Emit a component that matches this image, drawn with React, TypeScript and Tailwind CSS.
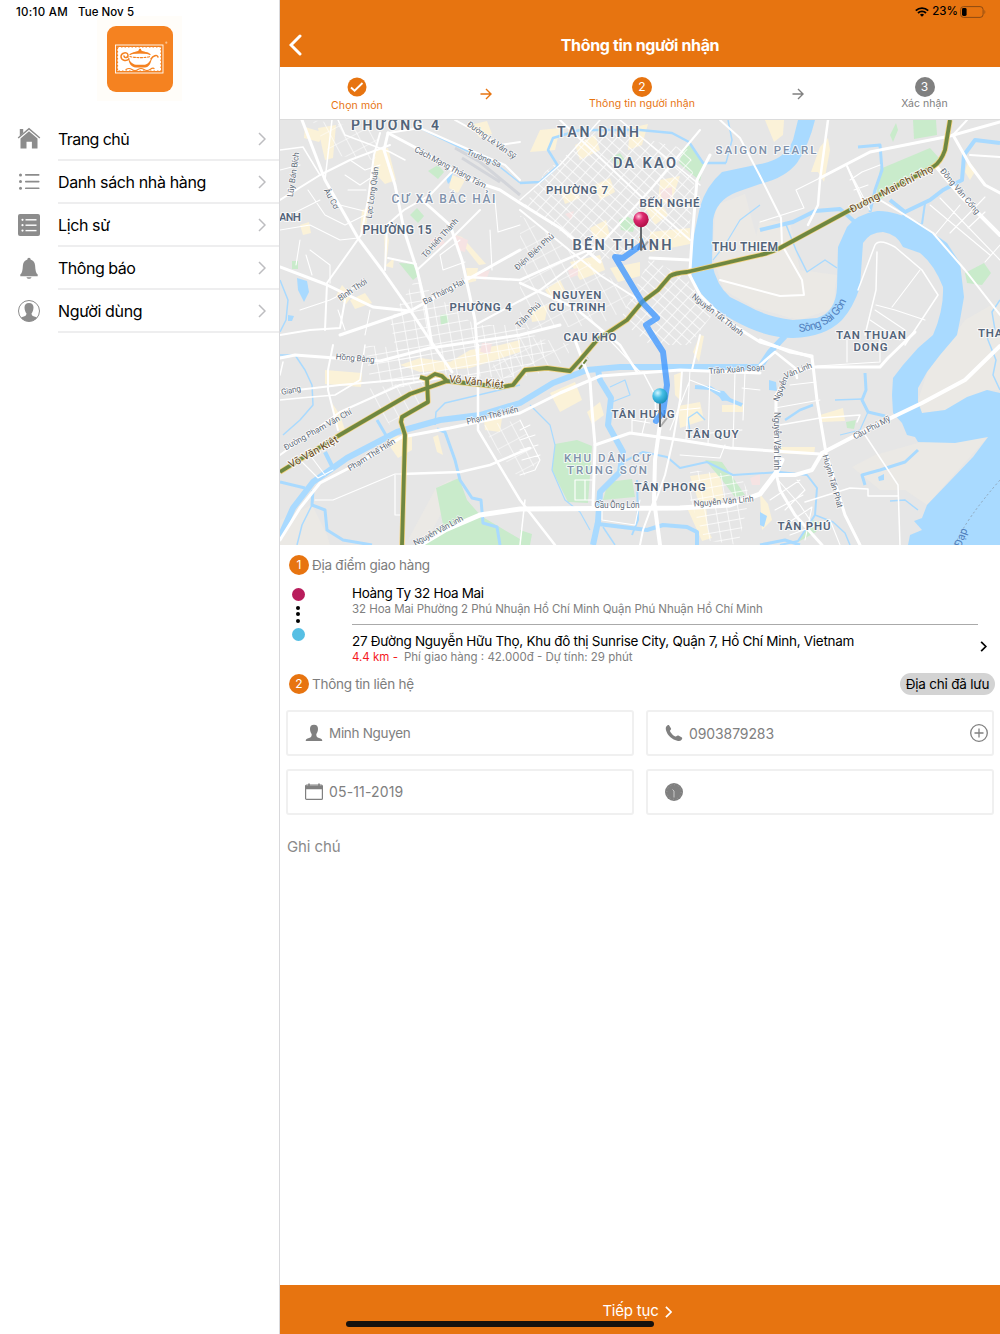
import type { ReactNode } from "react"

type Label = { t: string; x: number; y: number; w: number; s?: number; r?: number }

const MENU: { label: string; icon: ReactNode; tracking: string }[] = [
  { label: "Trang chủ", icon: <HomeIcon />, tracking: "tracking-[-0.58px]" },
  { label: "Danh sách nhà hàng", icon: <ListIcon />, tracking: "tracking-[-0.37px]" },
  { label: "Lịch sử", icon: <HistoryIcon />, tracking: "tracking-[-0.38px]" },
  { label: "Thông báo", icon: <BellIcon />, tracking: "tracking-[-0.48px]" },
  { label: "Người dùng", icon: <UserCircleIcon />, tracking: "tracking-[-0.34px]" },
]

function HomeIcon() {
  return (
    <svg width="24" height="24" viewBox="0 0 24 24" fill="#8c8c8c">
      <path d="M2.8 2h3.4v4L2.8 9z" />
      <path d="M12 .7 23.3 10.6l-.9 1L12 2.7 1.6 11.6l-.9-1z" />
      <path d="M12 4.2 20.5 11.5V21.500h-5.600V14.800H9.500V21.500H3.500V11.500z" />
    </svg>
  )
}

function ListIcon() {
  return (
    <svg width="24" height="24" viewBox="0 0 24 24" fill="#8c8c8c">
      {[4.900, 11.600, 18.300].map((y) => (
        <g key={y}>
          <circle cx="3.500" cy={y} r="1.500" />
          <rect x="8" y={y - 0.8} width="14.500" height="1.600" rx=".7" />
        </g>
      ))}
    </svg>
  )
}

function HistoryIcon() {
  return (
    <svg width="24" height="24" viewBox="0 0 24 24">
      <rect x="1" y="1" width="22" height="22" rx="2" fill="#8c8c8c" />
      {[6.800, 12.200, 17.600].map((y) => (
        <g key={y} fill="white">
          <circle cx="5.500" cy={y} r="1.100" />
          <rect x="8.500" y={y - 0.7} width="11" height="1.400" />
        </g>
      ))}
    </svg>
  )
}

function BellIcon() {
  return (
    <svg width="24" height="24" viewBox="0 0 24 24" fill="#8c8c8c">
      <path d="M12 1.800c1 0 1.600.7 1.600 1.700 2.900.8 4.300 3.200 4.500 6 .3 4.700.7 7.600 2.600 9.100v1.600H3.300v-1.600c1.900-1.500 2.300-4.400 2.600-9.100.2-2.800 1.600-5.200 4.500-6 0-1 .6-1.700 1.600-1.700z" />
      <path d="M9.500 21.200h5c-.4 1.100-1.300 1.600-2.500 1.600s-2.100-.5-2.500-1.600z" />
    </svg>
  )
}

function UserCircleIcon() {
  return (
    <svg width="24" height="24" viewBox="0 0 24 24">
      <circle cx="12" cy="12" r="10.500" fill="white" stroke="#8c8c8c" strokeWidth="1" />
      <path
        d="M12 4c3 0 4.600 1.800 4.500 4.600-.1 2.800-1 4.800-2 6 .2 2 1.200 2.600 3.500 3.200 1.200.3 1.600.6 1.900 1.100C17.900 21 15.200 22.300 12 22.300S6.100 21 4.100 18.900c.3-.5.7-.8 1.900-1.100 2.300-.6 3.300-1.200 3.500-3.200-1-1.200-1.900-3.200-2-6C7.400 5.800 9 4 12 4z"
        fill="#8c8c8c"
      />
    </svg>
  )
}

function Chevron({ className, width = 2 }: { className: string; width?: number }) {
  return (
    <svg className={className} viewBox="0 0 8 14" fill="none" stroke="currentColor" strokeWidth={width}>
      <path d="M1 1l6 6-6 6" />
    </svg>
  )
}

function Logo() {
  return (
    <svg width="85" height="85" viewBox="0 0 85 85" className="block">
      <rect width="85" height="85" fill="#fffdf9" />
      <rect x="10" y="10" width="66" height="66" rx="9" fill="#f58220" />
      <rect x="18.500" y="29" width="47.500" height="28" fill="none" stroke="#fff" strokeWidth=".9" />
      <rect x="20.500" y="31" width="43.500" height="24" fill="white" stroke="#f58220" strokeWidth="1.200" strokeDasharray="1.500 2" />
      <circle cx="69.300" cy="26.700" r="1.100" fill="#fbc08a" />
      <g fill="none" stroke="#f58220" strokeLinecap="round">
        <path d="M33 38.500c4-2.500 16-2.500 20 0" strokeWidth="1.300" />
        <path d="M33 40.500c5 1.500 16 1.500 20 0" strokeWidth="1.100" strokeDasharray="2 1.500" />
        <path d="M54 43c2-3 6-5 7-2" strokeWidth="1.500" />
        <path d="M32 43c-3 2.500-8 1.500-8-2.500 0-4 6.500-5 7-1.500.3 2.800-3.500 3.500-4 1" strokeWidth="1.500" />
        <path d="M29 53.500q3-2 6 0t6 0 6 0 6 0 4-1" strokeWidth="1.200" />
      </g>
      <path d="M31 39.500c1 5.500 4 8.800 8 9.200h9c3.500-.7 5-4.200 7-6.700-1 5-3 9.500-7 9.500H39c-5 0-8-5-8-12z" fill="#f58220" />
      <path d="M34 37.500c4-2 7-2 8-3.500-1-1.700 3-1.700 2 0 1 1.500 5 1.500 9 3.500z" fill="#f58220" />
    </svg>
  )
}

function Sidebar() {
  return (
    <aside className="flex w-[280px] shrink-0 flex-col border-r border-[#d9d9dc]">
      <div className="flex h-6 items-center gap-[10px] pt-[1px] pl-4 text-[11.5px] font-medium text-black">
        <span className="tracking-[0.3px]">10:10 AM</span>
        <span className="tracking-[0.05px]">Tue Nov 5</span>
      </div>
      <div className="-mt-2 ml-[97px]">
        <Logo />
      </div>
      <nav className="mt-[17px]">
        {MENU.map((item) => (
          <div key={item.label} className="flex h-[43px] items-center pl-[17px]">
            <span className="-mt-[1px]">{item.icon}</span>
            <div className="ml-[17px] flex h-full flex-1 items-center justify-between border-b-2 border-[#eeeeef] pr-[13px]">
              <span className={`text-[16px] text-black ${item.tracking}`}>{item.label}</span>
              <Chevron className="h-[14px] w-2 text-[#bdbdc0]" width={1.5} />
            </div>
          </div>
        ))}
      </nav>
    </aside>
  )
}

function Header() {
  return (
    <header className="h-[67px] bg-[#e77410]">
      <div className="flex h-[22px] items-center justify-end pt-[2px] pr-[14px] text-[11.5px] font-medium text-black">
        <svg width="14" height="10" viewBox="0 0 14 10" className="mr-[3px]" fill="none" stroke="black" strokeWidth="1.800">
          <path d="M.8 3.600a9 9 0 0 1 12.400 0M3 6a5.800 5.800 0 0 1 8 0" />
          <path d="M7 9.800 4.900 7.700a3 3 0 0 1 4.200 0z" fill="black" stroke="none" />
        </svg>
        <span>23%</span>
        <svg width="26" height="12" viewBox="0 0 26 12" className="ml-[2px]">
          <rect x=".6" y=".6" width="22.500" height="10.800" rx="3" fill="none" stroke="#8d4a12" />
          <rect x="2" y="2.100" width="4.600" height="7.800" rx="1.400" fill="black" />
          <path d="M24.500 4v4c1-.5 1-3.500 0-4z" fill="#8d4a12" />
        </svg>
      </div>
      <div className="grid h-[45px] grid-cols-[40px_1fr_40px] items-center">
        <svg width="14" height="22" viewBox="0 0 14 22" className="ml-[9px]" fill="none" stroke="white" strokeWidth="3" strokeLinecap="round">
          <path d="M11 2 2 11l9 9" />
        </svg>
        <h1 className="text-center text-[16px] font-bold tracking-[-0.33px] text-white">Thông tin người nhận</h1>
      </div>
    </header>
  )
}

function StepArrow({ className }: { className: string }) {
  return (
    <svg width="12" height="12" viewBox="0 0 12 12" className={`mt-[21px] justify-self-center ${className}`} fill="none" stroke="currentColor" strokeWidth="1.400">
      <path d="M.5 6h10M6 1l5 5-5 5" />
    </svg>
  )
}

function Steps() {
  return (
    <div className="grid h-[53px] grid-cols-[154px_104px_208px_104px_149px] border-b border-[#dcdcdc] text-[10.5px]">
      <div className="flex flex-col items-center pt-[10px] text-[#e77410]">
        <svg width="20" height="20" viewBox="0 0 20 20">
          <circle cx="10" cy="10" r="9.500" fill="#e77410" />
          <path d="m4 10.500 3.600 3.300L15.500 6" fill="none" stroke="white" strokeWidth="1.900" />
        </svg>
        <span className="mt-[2px] leading-[14px] tracking-[0.1px]">Chọn món</span>
      </div>
      <StepArrow className="text-[#e77410]" />
      <div className="flex flex-col items-center pt-[10px] text-[#e77410]">
        <span className="flex size-[20px] items-center justify-center rounded-full bg-[#e77410] text-[12px] text-white">2</span>
        <span className="leading-[14px] tracking-[0.05px]">Thông tin người nhận</span>
      </div>
      <StepArrow className="text-[#808080]" />
      <div className="flex flex-col items-center pt-[10px] text-[#808080]">
        <span className="flex size-[20px] items-center justify-center rounded-full bg-[#808080] text-[12px] text-white">3</span>
        <span className="leading-[14px] tracking-[0.05px]">Xác nhận</span>
      </div>
    </div>
  )
}

/* Map geometry, in the map's own 280..1000 x 120..545 coordinate space */

const RIVER =
  "M798 120 L793 140 Q785 160 760 164 L722 172 Q706 186 700 207 L695 230 Q688 265 693 280 Q705 305 733 320 Q765 338 793 338 Q825 337 842 320 Q853 308 860 287 L863 243 Q870 232 883 232 Q897 234 903 247 L920 253 Q934 264 943 287 Q944 310 933 335 L918 348 L903 365 L893 378 L892 395 L893 413 L902 423 L907 435 L915 437 L918 442 L955 443 L988 437 L973 457 L927 505 L922 518 L914 521 L922 530 L910 535 L908 545 L1000 545 L1000 393 L987 390 L967 397 L945 410 L922 413 L918 402 L918 388 L927 372 L940 355 L957 335 L960 320 L964 297 L960 263 L947 243 L933 233 L920 223 Q893 210 877 211 Q857 214 847 227 L838 247 L837 287 Q836 312 817 318 L793 320 Q765 316 750 307 L730 297 Q716 285 712 263 L713 220 Q716 200 737 192 L760 184 Q785 178 797 163 Q809 145 815 120Z"

const SAND = [
  "M712 255 L716 205 L745 194 L760 250 L800 290 L835 290 L834 308 L800 320 L755 308 L724 290Z",
  "M760 220 L790 222 L800 270 L837 275 L832 305 L790 318 L740 300Z",
  "M918 400 L928 370 L965 320 L1000 300 L1000 390 L987 390 L945 410 L922 413Z",
  "M918 443 L988 437 L927 505 L905 490 L880 490 L852 467 L875 455Z",
  "M280 520 L312 505 L327 535 L330 545 L280 545Z",
  "M436 488 L452 479 L448 500 L430 535 L408 540Z",
]

const PARKS = [
  "M684 147 L691 145 L704 163 L700 181 L679 163Z",
  "M875 203 L880 169 L930 148 L939 158 L930 168Z",
  "M913 120 L936 120 L937 135 L914 139Z",
  "M965 273 L984 263 L991 273 L982 285 L967 283Z",
  "M436 488 L459 478 L467 500 L481 516 L530 545 L415 545 L443 525Z",
  "M555 444 L577 440 L592 446 L588 503 L568 502 L552 470Z",
  "M608 482 L632 479 L635 497 L603 500Z",
  "M705 460 L722 462 L745 495 L735 497 L722 480Z",
  "M428 171 L438 165 L444 172 L438 179Z",
  "M410 215 L417 208 L424 216 L418 223Z",
  "M399 263 L415 264 L418 276 L413 280Z",
  "M440 315 L447 314 L449 322 L441 325Z",
  "M619 220 L627 216 L636 222 L633 232 L621 230Z",
  "M798 542 L812 520 L820 522 L816 532Z",
  "M846 422 L856 420 L854 429 L847 428Z",
  "M610 158 L620 153 L625 160 L617 166Z",
  "M292 261 L298 261 L298 269 L292 269Z",
  "M890 135 L896 123 L898 130 L893 142Z",
  "M520 530 L532 534 L530 545 L520 545Z",
]

const CREAM = [
  "M305 127 L325 133 L319 142 L304 138Z",
  "M318 128 L336 125 L333 158 L325 160 L322 147Z",
  "M374 150 L388 148 L396 180 L385 184 L374 172Z",
  "M452 175 L465 180 L458 193 L449 188Z",
  "M470 125 L487 121 L492 134 L480 138Z",
  "M362 210 L368 208 L366 232 L360 230Z",
  "M384 225 L389 240 L386 265 L394 258 L393 268 L385 266Z",
  "M300 225 L309 222 L311 233 L303 235Z",
  "M342 285 L352 296 L346 304 L336 296Z",
  "M350 300 L365 293 L372 303 L355 309Z",
  "M325 370 L362 373 L361 387 L325 384Z",
  "M330 400 L340 415 L345 430 L339 430Z",
  "M400 365 L420 358 L450 362 L470 350 L500 345 L520 340 L520 352 L470 368 L420 372Z",
  "M455 235 L462 237 L486 264 L479 265Z",
  "M466 268 L478 268 L476 281 L468 283Z",
  "M384 438 L412 434 L412 450 L398 458Z",
  "M433 437 L438 435 L443 455 L437 452Z",
  "M484 420 L502 418 L500 432 L485 430Z",
  "M540 130 L560 128 L555 150 L530 152Z",
  "M575 145 L595 135 L600 150 L580 160Z",
  "M630 128 L648 124 L642 145 L628 150Z",
  "M560 190 L575 185 L580 198 L565 204Z",
  "M595 185 L610 178 L615 192 L600 200Z",
  "M660 180 L680 176 L672 200 L658 205Z",
  "M645 208 L660 200 L668 215 L655 225Z",
  "M590 228 L606 220 L610 236 L595 240Z",
  "M570 262 L600 255 L605 270 L580 280Z",
  "M545 290 L560 280 L566 292 L552 300Z",
  "M650 232 L690 228 L690 244 L650 252Z",
  "M610 268 L640 262 L640 276 L618 282Z",
  "M530 310 L548 305 L545 320 L532 322Z",
  "M550 393 L575 382 L582 400 L560 412Z",
  "M587 412 L600 402 L604 415 L592 424Z",
  "M678 406 L700 402 L704 420 L680 428Z",
  "M674 375 L682 372 L680 400 L675 395Z",
  "M693 352 L700 335 L704 336 L699 362Z",
  "M690 476 L720 472 L724 500 L700 506Z",
  "M688 510 L706 505 L708 530 L712 538 L702 541Z",
  "M722 405 L743 405 L743 412 L722 412Z",
  "M820 415 L843 408 L845 421 L822 422Z",
  "M776 447 L815 447 L814 455 L776 453Z",
  "M820 147 L828 138 L830 150 L824 182 L818 172 L811 172Z",
  "M765 120 L784 120 L783 135 L774 142Z",
  "M968 160 L976 170 L970 180 L965 172Z",
  "M760 494 L768 504 L772 520 L762 530Z",
]

const PINK = [
  "M430 240 L440 236 L445 243 L436 249Z",
  "M455 235 L468 240 L465 252 L457 250Z",
  "M478 273 L490 270 L486 280 L476 278Z",
  "M565 214 L574 211 L571 220Z",
  "M660 190 L672 187 L672 198 L662 200Z",
  "M750 478 L760 474 L760 485 L752 485Z",
  "M482 343 L492 343 L490 354 L480 352Z",
  "M568 270 L578 268 L578 275 L570 278Z",
]

const CANALS: [string, number][] = [
  ["M280 537 L293 508 L313 482 L347 458 L397 432 L440 420 L480 415 L520 403 L553 383 L587 370 L620 367 L760 367 L770 352 L785 336", 6],
  ["M598 370 L600 380 L611 398 L608 425 L623 452 L620 472 L600 492 L598 522 L593 545", 6],
  ["M598 524 L647 530 L663 525 L687 527 L697 532 L697 545", 4],
  ["M623 462 L643 452 L667 457 L680 468 L707 462 L733 475 L780 472 L807 475 L817 488 L815 515 L798 541 L780 545", 2],
  ["M815 515 L833 522 L845 533 L850 545", 1.500],
  ["M520 183 L540 182 L558 166 L548 150 L553 138 L580 130 L640 130 L672 133 L689 142 L703 163 L726 163", 2.500],
  ["M520 183 L495 163 L465 150 L440 138 L420 128", 1.500],
  ["M726 163 L732 140 L728 120", 1.500],
  ["M760 230 L793 222 L815 211 L840 209 L855 222", 4],
  ["M785 222 L796 250 L807 272 L825 260 L837 268", 1.500],
  ["M870 212 L875 190 L882 170 L880 145 L858 147", 3],
  ["M890 200 L905 212 L930 200 L943 190 L962 180 L964 155 L975 140 L1000 143", 4],
  ["M905 212 L903 218", 3],
  ["M925 203 L922 224", 2],
  ["M280 355 L295 355 L305 370 L312 385 L313 405 L300 420 L283 435", 1.500],
  ["M280 280 L288 300 L286 320 L280 332", 1.500],
  ["M325 452 L333 468", 4],
  ["M377 420 L387 437", 3],
  ["M280 482 L305 488", 3],
  ["M313 490 L312 505 L325 510 L327 530 L343 540 L372 545", 3],
  ["M312 505 L302 525 L297 545", 1.500],
  ["M435 425 L436 412 L445 403 L520 385", 1.500],
  ["M437 429 L445 432 L455 460 L460 480 L472 498 L481 500 L483 523 L497 527 L500 545", 3],
  ["M530 405 L550 425 L555 445 L552 470 L565 500 L580 512 L590 530", 1.200],
  ["M865 373 L866 390 L862 400 L868 412 L885 416", 3],
  ["M835 400 L862 399", 1.500],
  ["M868 412 L860 430 L840 435", 1.200],
  ["M918 450 L905 462 L880 470 L862 475 L865 485", 3],
  ["M890 501 L905 500 L918 510", 1.500],
  ["M1000 390 L993 375 L996 360 L988 340 L986 330", 1.500],
  ["M1000 300 L992 312 L995 330", 1.500],
  ["M695 387 L710 388 L725 398 L742 405", 4],
  ["M690 432 L688 418 L697 412 L705 420", 1.500],
  ["M785 420 L800 410 L813 405", 2.500],
  ["M760 545 L785 540 L800 545", 3],
  ["M603 527 L615 545", 1.500],
  ["M637 480 L638 520 L632 535", 2],
  ["M713 260 L725 245 L740 220 L760 205", 1.200],
  ["M610 387 L625 380 L630 395 L612 402", 1.200],
]

const PONDS = [
  "M297 278 L307 281 L309 292 L304 302 L298 290Z",
  "M288 315 L294 316 L292 321 L288 321Z",
  "M446 178 L453 173 L450 182 L448 184Z",
  "M769 380 L776 382 L777 391 L769 390Z",
  "M878 477 L884 474 L884 480 L879 481Z",
  "M715 390 L724 391 L732 400 L722 401Z",
  "M760 512 L767 516 L764 527 L760 525Z",
]

const ROADS: [string, number][] = [
  ["M302 120 L325 180 L358 238 L382 270 L410 310 L430 340 L452 372", 3],
  ["M388 133 L384 150 L395 185 L404 230 L417 270 L425 303 L432 345", 3],
  ["M388 133 L420 150 L465 178 L500 190 L520 203 L560 228 L600 262", 3],
  ["M388 133 L420 128 L447 140 L470 150 L505 165 L520 180", 2],
  ["M380 133 L374 155 L368 200 L361 235 L327 283 L325 330", 2],
  ["M280 200 L320 175 L350 160 L390 145", 2],
  ["M280 267 L325 284 L373 307 L410 311 L470 278 L520 250", 3],
  ["M340 335 L410 311", 3],
  ["M280 335 L310 330 L340 328 L345 300", 2],
  ["M332 120 L325 180", 1.500],
  ["M455 120 L500 145 L520 142", 2],
  ["M422 200 L450 225 L462 260 L475 320 L478 360", 3],
  ["M468 277 L520 280 L560 262 L600 245", 2.500],
  ["M385 270 L387 225 L404 210 L430 195 L452 172", 2],
  ["M388 258 L416 264", 2],
  ["M338 120 L345 135 L390 152 L405 160", 1.500],
  ["M280 150 L303 147 L320 175", 1.500],
  ["M417 270 L455 235 L480 210", 2],
  ["M520 283 L575 308 L620 345 L637 372", 2.500],
  ["M475 325 L540 290 L600 245 L650 190 L700 130", 2],
  ["M520 200 L560 165 L600 120", 1.500],
  ["M520 210 L600 275 L642 302", 2],
  ["M560 120 L650 205 L690 240", 2],
  ["M620 120 L700 185", 1.500],
  ["M710 155 L697 180 L692 240 L690 270", 3],
  ["M650 258 L690 260", 3],
  ["M688 272 L700 295 L725 320 L760 342 L812 357 L817 400 L826 453 L845 515 L860 545", 3],
  ["M280 358 L295 355 L335 358 L380 361 L430 348 L520 335 L560 325", 3],
  ["M333 345 L328 370 L328 390 L338 430", 2],
  ["M280 392 L340 385 L420 378", 2],
  ["M280 400 L300 398 L335 395 L360 380 L365 345", 1.500],
  ["M280 455 L340 412 L400 385 L440 378", 2],
  ["M280 540 L300 508 L320 483 L355 465 L402 437 L450 428 L520 413 L560 393 L600 376 L680 370 L760 373", 3],
  ["M402 474 L460 472 L490 465 L530 448", 2.500],
  ["M315 500 L333 500 L395 474 L402 474", 1.200],
  ["M395 475 L395 515 L402 515", 1.200],
  ["M478 345 L478 430 L520 500 L555 545", 2.500],
  ["M420 545 L445 530 L480 515 L520 509 L680 508 L730 505 L760 494 L776 473 L782 460", 5],
  ["M575 340 L590 380 L592 410 L595 445 L593 505", 3],
  ["M595 445 L630 433 L680 440 L730 448 L820 454", 3],
  ["M660 424 L655 460 L654 500 L660 545", 4],
  ["M643 372 L655 395 L656 424", 1.500],
  ["M654 500 L643 530 L640 545", 2],
  ["M682 370 L680 400 L673 440 L665 475 L656 500", 2],
  ["M700 335 L692 370", 2],
  ["M822 453 L870 428 L922 403 L965 380 L1000 346", 4],
  ["M822 453 L812 470 L795 475 L778 475", 4],
  ["M760 365 L775 352 L795 368 L797 378", 2.500],
  ["M760 340 L790 352 L812 356", 3],
  ["M776 473 L780 490 L795 515 L822 545", 3],
  ["M776 462 L776 395 L790 372 L815 367 L880 367 L888 358 L915 332", 3],
  ["M780 425 L820 418 L860 415 L857 422", 1.500],
  ["M865 435 L898 485 L900 545", 1.500],
  ["M898 496 L868 496 L868 489 L850 488 L805 502", 1.500],
  ["M828 120 L820 180 L818 205 L808 225", 2.500],
  ["M760 176 L781 218 L782 245 L802 280 L804 295 L780 296 L720 280", 2],
  ["M820 178 L870 152 L950 136 L1000 122", 3],
  ["M847 166 L862 200 L880 200 L905 215 L933 233 L965 270 L1000 315", 2],
  ["M858 290 L875 245 Q879 238 895 247 L922 270 L938 295 L905 345", 1.500],
  ["M865 335 L876 290 L877 252", 1.500],
  ["M953 135 L970 165 L985 185 L1000 193", 3],
  ["M935 165 L960 195 L1000 235", 4],
  ["M970 155 L1000 157", 2],
  ["M953 135 L967 120", 2],
  ["M720 120 L740 138 L760 176", 2],
  ["M280 375 L283 362", 1.500],
  ["M525 500 L520 545", 1.500],
]

// Block outlines drawn with thin lines
const MINOR =
  "M796 190 L826 175 M796 190 L804 208 L760 222 M850 180 L862 172 L880 165 M854 190 L868 185 M848 168 L870 210 M930 205 L990 255 M940 198 L1000 260 M950 233 L985 197 M968 228 L985 212 M985 262 L1000 245 M935 235 L960 205 M875 310 L905 330 M892 307 L920 270 M876 305 L895 310 L925 320 M870 320 L900 340 M817 366 L880 362 L880 340 M847 362 L847 340 M775 408 L820 400 M790 385 L816 382 M797 480 L805 490 L785 510 M770 500 L800 480 M775 510 L803 495 M785 525 L812 507 L805 540 M790 535 L830 520 L840 545 M778 480 L800 505 L810 520 M600 330 L640 372 M575 480 L592 480 M575 480 L575 500 L592 500 M585 480 L585 500 M602 500 L602 520 L635 525 L640 500 M520 420 L540 460 L535 470 L520 475 M520 430 L530 425 M520 440 L535 435 M520 450 L538 445 M522 460 L540 455 M632 420 L650 423 M632 433 L632 415 M642 434 L646 418 M680 410 L700 408 M690 370 L686 440 M710 370 L708 445 M735 372 L733 448 M745 372 L743 420 M680 455 L720 458 L725 445 M670 430 L690 380 L720 392 M742 430 L690 435 M760 390 L742 388 M310 455 L325 475 M300 460 L318 478 L333 470 M308 190 L325 215 L345 225 L365 215 M280 230 L310 225 L340 240 L358 238 M300 240 L296 265 M310 250 L330 265 L330 283 M306 255 L312 275 M350 160 L365 170 L380 165 M345 175 L360 185 L375 175 M348 190 L366 190 M340 205 L368 212 M300 310 L330 300 L360 285 M338 310 L345 330 M370 310 L365 335 M280 170 L300 165 M290 215 L320 200 M440 255 L460 240 M440 255 L443 270 L465 262 M490 230 L492 270 M495 200 L498 232 L520 225"

const LABELS_AREA: Label[] = [
  { t: "PHƯỜNG 4", x: 395, y: 129.500, w: 88, s: 14 },
  { t: "TAN DINH", x: 598, y: 137, w: 82, s: 14 },
  { t: "DA KAO", x: 644.500, y: 167.500, w: 63, s: 14.500 },
  { t: "PHƯỜNG 7", x: 577, y: 194, w: 62, s: 11.500 },
  { t: "BẾN NGHÉ", x: 669.500, y: 207, w: 60, s: 11.500 },
  { t: "BẾN THÀNH", x: 622, y: 249.500, w: 99, s: 14.500 },
  { t: "THU THIEM", x: 745, y: 250.500, w: 66, s: 12 },
  { t: "PHƯỜNG 15", x: 397, y: 234, w: 69, s: 12 },
  { t: "PHƯỜNG 4", x: 480.500, y: 311, w: 62, s: 11.500 },
  { t: "NGUYEN", x: 577, y: 298.500, w: 49, s: 11.500 },
  { t: "CU TRINH", x: 577, y: 310.500, w: 57, s: 11.500 },
  { t: "CAU KHO", x: 590, y: 340.500, w: 53, s: 11.500 },
  { t: "TÂN HƯNG", x: 643, y: 418, w: 63, s: 11.500 },
  { t: "TÂN QUY", x: 712, y: 438, w: 53, s: 11.500 },
  { t: "TÂN PHONG", x: 670, y: 491, w: 71, s: 11.500 },
  { t: "TÂN PHÚ", x: 804, y: 529.500, w: 53, s: 11.500 },
  { t: "TAN THUAN", x: 871, y: 338.500, w: 70, s: 11.500 },
  { t: "DONG", x: 870.500, y: 350.500, w: 34, s: 11.500 },
  { t: "THANH", x: 999, y: 337, w: 42, s: 11.500 },
  { t: "ANH", x: 290, y: 220.500, w: 22, s: 11.500 },
]

const LABELS_SOFT: Label[] = [
  { t: "SAIGON PEARL", x: 766, y: 153.500, w: 101, s: 11.500 },
  { t: "CƯ XÁ BẮC HẢI", x: 443.500, y: 202.500, w: 104, s: 12 },
  { t: "KHU DÂN CƯ", x: 607, y: 461.500, w: 86, s: 11.500 },
  { t: "TRUNG SƠN", x: 607, y: 473.500, w: 80, s: 11.500 },
]

const LABELS_STREET: Label[] = [
  { t: "Lũy Bán Bích", x: 296, y: 175, w: 45, r: -82 },
  { t: "Âu Cơ", x: 329, y: 200, w: 22, r: 62 },
  { t: "Lạc Long Quân", x: 375, y: 193, w: 52, r: -82 },
  { t: "Cách Mạng Tháng Tám", x: 449, y: 170, w: 80, r: 28 },
  { t: "Đường Lê Văn Sỹ", x: 490, y: 142.500, w: 58, r: 36 },
  { t: "Trường Sa", x: 483, y: 161, w: 36, r: 22 },
  { t: "Tô Hiến Thành", x: 442, y: 240, w: 50, r: -48 },
  { t: "Bình Thới", x: 354, y: 292, w: 33, r: -34 },
  { t: "Ba Tháng Hai", x: 445, y: 294, w: 46, r: -28 },
  { t: "Điện Biên Phủ", x: 536, y: 254, w: 50, r: -42 },
  { t: "Trần Phú", x: 530, y: 317, w: 32, r: -46 },
  { t: "Nguyễn Tất Thành", x: 716, y: 317, w: 63, r: 38 },
  { t: "Đồng Văn Cống", x: 958, y: 193, w: 57, r: 50 },
  { t: "Hồng Bàng", x: 355, y: 361, w: 39, r: 5 },
  { t: "Giang", x: 291.500, y: 393, w: 20, r: -12 },
  { t: "Đường Phạm Văn Chí", x: 319, y: 432, w: 76, r: -29 },
  { t: "Phạm Thế Hiển", x: 373, y: 457, w: 54, r: -32 },
  { t: "Phạm Thế Hiển", x: 493, y: 418, w: 53, r: -14 },
  { t: "Nguyễn Văn Linh", x: 439.500, y: 533, w: 55, r: -28 },
  { t: "Trần Xuân Soạn", x: 737, y: 372, w: 56, r: -4 },
  { t: "Nguyễn Văn Linh", x: 724, y: 504, w: 60, r: -5 },
  { t: "Cầu Ông Lớn", x: 617, y: 508, w: 45, r: 0 },
  { t: "Nguyễn Văn Linh", x: 774, y: 441, w: 58, r: 90 },
  { t: "Văn Linh", x: 799, y: 373, w: 29, r: -22 },
  { t: "Nguyễn", x: 783, y: 390, w: 26, r: -68 },
  { t: "Cầu Phú Mỹ", x: 873, y: 430, w: 41, r: -28 },
  { t: "Huỳnh Tấn Phát", x: 830, y: 482, w: 55, r: 74 },
]

const LABELS_HIGHWAY: Label[] = [
  { t: "Đường Mai Chí Thọ", x: 893, y: 192, w: 92, s: 10.500, r: -27 },
  { t: "Võ Văn Kiệt", x: 476, y: 385, w: 55, s: 10.500, r: 6 },
  { t: "Võ Văn Kiệt", x: 315, y: 455, w: 55, s: 10.500, r: -29 },
]

const HIGHWAY =
  "M950 120 L945 150 Q941 162 933 167 L850 210 L780 248 Q770 253 760 255 L687 272 Q675 273 670 276 L658 290 L642 302 L627 320 L597 340 L580 360 L570 371 L547 368 L525 370 L513 385 L502 387 L447 381 L410 394 L338 436 L280 472 M420 377 L427 379 L435 374 L442 376 L448 382 M427 379 L428 402 L402 417 L401 422 L405 435 L402 545"

function MapText({ items, className }: { items: Label[]; className: string }) {
  return (
    <g className={className} textAnchor="middle" paintOrder="stroke" stroke="white" strokeOpacity=".75" strokeLinejoin="round">
      {items.map(({ t, x, y, w, s = 8.300, r = 0 }) => (
        <text key={`${t}${x}`} x={x} y={y} fontSize={s} strokeWidth={s > 9 ? 2.200 : 1.500} textLength={w} transform={`rotate(${r} ${x} ${y})`}>
          {t}
        </text>
      ))}
    </g>
  )
}

function Pin({ x, y, fill }: { x: number; y: number; fill: string }) {
  return (
    <g>
      <path d={`M${x} ${y + 31} l7 -9`} stroke="#555" strokeOpacity=".4" strokeWidth="2" />
      <rect x={x - 1} y={y + 6} width="2" height="25" fill="#666a6e" />
      <circle cx={x} cy={y} r="7.700" fill={fill} />
    </g>
  )
}

function RouteMap() {
  return (
    <svg width="720" height="425" viewBox="280 120 720 425" className="block font-[Roboto,sans-serif]">
      <defs>
        <pattern id="blocks" width="10" height="8" patternUnits="userSpaceOnUse" patternTransform="rotate(42)">
          <path d="M0 0H10M0 0V8" stroke="white" strokeWidth="1.500" />
        </pattern>
        <pattern id="blocksFlat" width="11" height="9" patternUnits="userSpaceOnUse" patternTransform="rotate(-10)">
          <path d="M0 0H11M0 0V9" stroke="white" strokeWidth="1.400" />
        </pattern>
        <pattern id="blocksSteep" width="12" height="15" patternUnits="userSpaceOnUse" patternTransform="rotate(-28)">
          <path d="M0 0H12M0 0V15" stroke="white" strokeWidth="1.200" />
        </pattern>
        <radialGradient id="pinPink" cx=".35" cy=".3" r=".8">
          <stop offset="0" stopColor="#ffc0d8" />
          <stop offset=".35" stopColor="#dd2a70" />
          <stop offset="1" stopColor="#a8093f" />
        </radialGradient>
        <radialGradient id="pinBlue" cx=".35" cy=".3" r=".8">
          <stop offset="0" stopColor="#d2f6ff" />
          <stop offset=".4" stopColor="#45bfe6" />
          <stop offset="1" stopColor="#1589b4" />
        </radialGradient>
      </defs>
      <rect x="280" y="120" width="720" height="425" fill="#e6e6e6" />
      <g fill="#ebe9e5">{SAND.map((d) => <path key={d} d={d} />)}</g>
      <g fill="#fbf2d8">{CREAM.map((d) => <path key={d} d={d} />)}</g>
      <g fill="#f6e3e3">{PINK.map((d) => <path key={d} d={d} />)}</g>
      <g fill="#c9ebcb">{PARKS.map((d) => <path key={d} d={d} />)}</g>

      {/* City blocks */}
      <path d="M545 172 L600 128 L690 150 L695 190 L688 235 L645 245 L600 262 L525 205Z" fill="url(#blocks)" />
      <path d="M520 215 L600 270 L640 300 L600 325 L520 330Z" fill="url(#blocksSteep)" />
      <path d="M650 258 L688 280 L712 315 L690 345 L650 345 L620 320Z" fill="url(#blocks)" />
      <path d="M415 280 L475 325 L520 325 L555 350 L510 378 L400 372 L390 320Z" fill="url(#blocksFlat)" />
      <path d="M365 345 L420 350 L430 378 L400 388 L370 380Z" fill="url(#blocksFlat)" />
      <path d="M312 120 L380 130 L375 160 L330 155Z" fill="url(#blocksSteep)" />
      <path d="M360 390 L425 380 L425 400 L390 425Z" fill="url(#blocksSteep)" />
      <path d="M690 470 L740 475 L750 495 L738 545 L705 540 L690 500Z" fill="url(#blocksFlat)" />
      <path d="M484 385 L555 370 L575 345 L520 335 L500 350Z" fill="url(#blocksSteep)" />
      <path d="M484 425 L520 420 L540 460 L520 480 L490 440Z" fill="url(#blocksSteep)" />

      <path d="M455 148 L480 162 L520 195 M462 158 L500 182" stroke="#d3d5da" strokeWidth="3" fill="none" />
      <path d={RIVER} fill="#a9daff" />
      <g fill="#a9daff">{PONDS.map((d) => <path key={d} d={d} />)}</g>
      <g fill="none" stroke="#a9daff" strokeLinejoin="round">
        {CANALS.map(([d, w]) => <path key={d} d={d} strokeWidth={w} />)}
      </g>
      <g fill="none" stroke="white" strokeLinejoin="round" strokeLinecap="round">
        <path d={MINOR} strokeWidth="1.100" />
        {ROADS.map(([d, w]) => <path key={d} d={d} strokeWidth={w} />)}
      </g>
      <path d="M1000 480 Q965 520 955 545" fill="none" stroke="#8fa5b8" strokeDasharray="2 2.500" />

      {/* Expressway */}
      <g fill="none" strokeLinejoin="round">
        <path d={HIGHWAY} stroke="#f3d27c" strokeWidth="5.300" />
        <path d={HIGHWAY} stroke="#6f8741" strokeWidth="3.800" />
        <path d="M579 369 L588 358" stroke="#6f8741" strokeWidth="2" strokeDasharray="5 2" />
      </g>

      <MapText items={LABELS_STREET} className="fill-[#5f6b78]" />
      <MapText items={LABELS_HIGHWAY} className="fill-[#6b4a1c]" />
      <MapText items={LABELS_AREA} className="fill-[#53647a] font-semibold" />
      <MapText items={LABELS_SOFT} className="fill-[#7f91ab] font-medium" />
      <g className="fill-[#5180bd]" fontSize="11">
        <path id="riverName" d="M799 332 Q838 329 849 294" fill="none" />
        <text textLength="60">
          <textPath href="#riverName">Sông Sài Gòn</textPath>
        </text>
        <text x="961" y="548" transform="rotate(-70 961 548)">Đạp</text>
      </g>

      {/* Delivery route */}
      <path
        d="M640 246 L623 258 L615 257 L642 302 L657 318 L646 325 L652 335 L663 352 L667 385 L663 412 L656 421"
        fill="none"
        stroke="#3f97ff"
        strokeOpacity=".78"
        strokeWidth="6"
        strokeLinejoin="round"
        strokeLinecap="round"
      />
      <Pin x={641} y={219.500} fill="url(#pinPink)" />
      <Pin x={660} y={396} fill="url(#pinBlue)" />
    </svg>
  )
}

function SectionTitle({ n, children }: { n: number; children: string }) {
  return (
    <div className="flex items-center">
      <span className="mr-[3px] flex size-5 items-center justify-center rounded-full bg-[#e77410] text-[12px] text-white">{n}</span>
      <h2 className="text-[13.5px] tracking-[-0.27px] text-[#7d7d7d]">{children}</h2>
    </div>
  )
}

function Addresses() {
  return (
    <div className="flex h-[89px] pt-[8px]">
      <div className="flex w-[36px] flex-col items-center pt-[4.5px]">
        <span className="size-[13px] rounded-full bg-[#b81d5c]" />
        <div className="flex h-[27px] flex-col items-center justify-center gap-[2.5px]">
          <span className="size-1 rounded-full bg-black" />
          <span className="size-1 rounded-full bg-black" />
          <span className="size-1 rounded-full bg-black" />
        </div>
        <span className="size-[13px] rounded-full bg-[#56bfe4]" />
      </div>
      <div className="ml-9 w-[626px]">
        <div className="h-[42px] border-b border-[#aaaaaa]">
          <p className="text-[13.5px] leading-[20px] tracking-[-0.34px] text-black">Hoàng Ty 32 Hoa Mai</p>
          <p className="text-[11.5px] leading-[13px] tracking-[-0.065px] text-[#808080]">
            32 Hoa Mai Phường 2 Phú Nhuận Hồ Chí Minh Quận Phú Nhuận Hồ Chí Minh
          </p>
        </div>
        <p className="mt-[6px] text-[13.5px] leading-[20px] tracking-[-0.28px] text-black">
          27 Đường Nguyễn Hữu Thọ, Khu đô thị Sunrise City, Quận 7, Hồ Chí Minh, Vietnam
        </p>
        <p className="flex gap-[6px] text-[11.5px] leading-[13px] text-[#808080]">
          <span className="text-[#f5191d]">4.4 km -</span>
          <span>Phí giao hàng : 42.000đ - Dự tính: 29 phút</span>
        </p>
      </div>
      <Chevron className="mt-[58px] ml-[2px] h-[11px] w-[7px] text-black" width={2.2} />
    </div>
  )
}

function Field({ icon, value, tracking = "", action }: { icon: ReactNode; value?: string; tracking?: string; action?: ReactNode }) {
  return (
    <div className="flex h-[46px] items-center rounded-[3px] border-2 border-[#f0f0f0] pr-1 pl-[17px] text-[14px] text-[#808080]">
      {icon}
      <span className={`ml-[6px] flex-1 ${tracking}`}>{value}</span>
      {action}
    </div>
  )
}

function ContactForm() {
  return (
    <div className="mt-[15px] grid grid-cols-[348px_348px] gap-x-3 gap-y-[12.5px] pl-[6px]">
      <Field
        value="Minh Nguyen"
        tracking="text-[13.5px] tracking-[-0.3px]"
        icon={
          <svg width="18" height="18" viewBox="0 0 18 18" fill="#808080">
            <path d="M9 .8c2.700 0 4.100 1.600 4 4.100-.1 2.500-.9 4-1.700 5 0 2.600.6 3.400 2.700 4 2.200.6 3.200 1 3.300 3H.7c.1-2 1.100-2.400 3.300-3 2.100-.6 2.700-1.400 2.700-4-.8-1-1.600-2.500-1.700-5C4.900 2.400 6.300.8 9 .8z" />
          </svg>
        }
      />
      <Field
        value="0903879283"
        tracking="tracking-[-0.1px]"
        icon={
          <svg width="18" height="18" viewBox="0 0 18 18" fill="#808080">
            <path d="M1.300 2.500C2 1.500 3 .7 3.900 1l2 3.300c.4.700.2 1.300-.4 1.700-.7.5-.6 1 .1 2.200 1 1.500 2.400 3 4.200 4 1 .6 1.500.5 1.900-.1.400-.7 1-.9 1.700-.5l3.500 2c.7.5.3 1.600-.5 2.400-.8.800-2 1.200-3.400.9C6.800 15.600 2.400 11.300 1 6.200.6 4.600.7 3.400 1.300 2.500z" />
          </svg>
        }
        action={
          <svg width="18" height="18" viewBox="0 0 18 18" fill="none" stroke="#808080" strokeWidth="1.300">
            <circle cx="9" cy="9" r="8.300" />
            <path d="M9 4.500v9M4.500 9h9" />
          </svg>
        }
      />
      <Field
        value="05-11-2019"
        tracking="tracking-[0.15px]"
        icon={
          <svg width="18" height="18" viewBox="0 0 18 18" fill="none" stroke="#808080">
            <rect x=".6" y="2.200" width="16.800" height="14.200" rx="1" strokeWidth="1.200" />
            <path d="M.6 3.800h16.800M.6 5.300h16.800" strokeWidth="1.800" />
            <path d="M4 .5v2.500M14 .5v2.500" strokeWidth="1.600" />
          </svg>
        }
      />
      <Field
        icon={
          <svg width="18" height="18" viewBox="0 0 18 18">
            <circle cx="9" cy="9" r="9" fill="#808080" />
            <circle cx="9" cy="9" r="7.200" fill="none" stroke="#b5b5b5" strokeWidth=".7" strokeDasharray=".7 3.070" />
            <path d="M7.500 6.500 9 8v6.500" fill="none" stroke="#c8c8c8" strokeWidth="1" />
          </svg>
        }
      />
    </div>
  )
}

export default function App() {
  return (
    <div className="relative flex h-[1334px] w-[1000px] overflow-hidden bg-white font-[Inter,sans-serif]">
      <Sidebar />
      <main className="flex flex-1 flex-col">
        <Header />
        <Steps />
        <RouteMap />
        <section className="flex-1">
          <div className="mt-[10px] pl-[9px]">
            <SectionTitle n={1}>Địa điểm giao hàng</SectionTitle>
          </div>
          <Addresses />
          <div className="mt-[9px] flex h-[22px] items-center justify-between pr-[5px] pl-[9px]">
            <SectionTitle n={2}>Thông tin liên hệ</SectionTitle>
            <button className="h-[22px] w-[95px] rounded-full bg-[#d3d3d3] text-[13.5px] tracking-[-0.2px] text-black">Địa chỉ đã lưu</button>
          </div>
          <ContactForm />
          <p className="mt-[21px] pl-[7px] text-[15px] tracking-[-0.1px] text-[#8a8a8a]">Ghi chú</p>
        </section>
        <footer className="flex h-[49px] items-center justify-center gap-[6px] bg-[#e77410] pt-[3px] pr-[6px] text-[15px] tracking-[-0.2px] text-white">
          Tiếp tục
          <Chevron className="mt-[2px] h-[12px] w-[7px]" width={2} />
        </footer>
      </main>

      {/* Home indicator */}
      <div className="absolute bottom-[7px] left-[346px] h-[6px] w-[308px] rounded-full bg-[#16110d]" />
    </div>
  )
}
